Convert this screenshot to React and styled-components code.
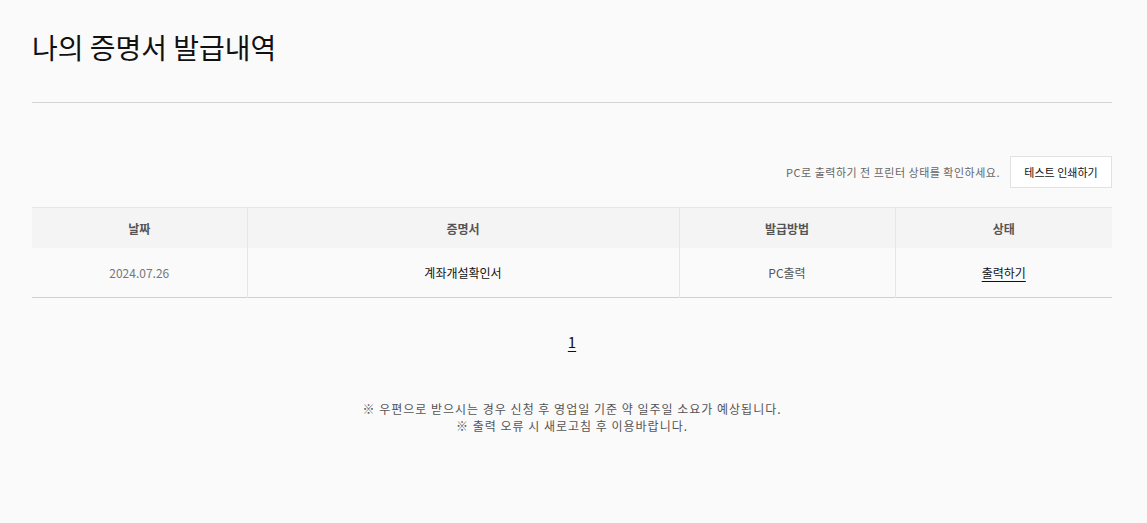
import React from "react";
import styled, { createGlobalStyle } from "styled-components";

const Global = createGlobalStyle`
  html, body { margin: 0; padding: 0; background: #fafafa; }
  body { font-family: "Noto Sans CJK KR", "Noto Sans", sans-serif; color: #111; }
`;

const Page = styled.div`
  width: 1080px;
  padding: 0 0 0 32px;
`;

const Header = styled.header`
  padding: 27px 0 35px;
  border-bottom: 1px solid #d4d4d4;
`;

const Title = styled.h1`
  margin: 0;
  font-size: 28px;
  line-height: 40px;
  font-weight: 400;
  color: #111;
`;

const NoticeBar = styled.div`
  display: flex;
  justify-content: flex-end;
  align-items: center;
  gap: 10px;
  margin-top: 53px;
`;

const NoticeText = styled.span`
  font-size: 11px;
  color: #666;
  letter-spacing: 0.5px;
`;

const TestButton = styled.button`
  height: 32px;
  width: 102px;
  background: #fff;
  border: 1px solid #e2e2e2;
  font-family: inherit;
  font-size: 11px;
  color: #111;
  padding: 0;
  cursor: pointer;
`;

const Table = styled.table`
  width: 100%;
  margin-top: 19px;
  border-collapse: collapse;
  table-layout: fixed;
  border-top: 1px solid #e6e6e6;
  border-bottom: 1px solid #cfcfcf;
`;

const Col = styled.col`
  width: ${(p) => p.$w}px;
`;

const Th = styled.th`
  height: 40px;
  background: #f4f4f4;
  font-size: 12px;
  font-weight: 700;
  color: #555;
  padding: 0;
  border-left: ${(p) => (p.$first ? "none" : "1px solid #e6e6e6")};
`;

const Td = styled.td`
  height: 49px;
  text-align: center;
  font-size: 12px;
  padding: 0;
  color: ${(p) => p.$color || "#111"};
  border-left: ${(p) => (p.$first ? "none" : "1px solid #e6e6e6")};
`;

const PrintLink = styled.a`
  color: #111;
  text-decoration: underline;
  text-underline-offset: 3px;
  cursor: pointer;
`;

const Pagination = styled.div`
  margin-top: 34px;
  text-align: center;
  line-height: 18px;
`;

const PageNum = styled.a`
  font-size: 15px;
  color: #111;
  text-decoration: underline;
  text-underline-offset: 3px;
`;

const Notes = styled.div`
  margin-top: 49px;
  text-align: center;
  font-size: 12px;
  line-height: 17px;
  color: #555;
  letter-spacing: 1px;
`;

export default function App() {
  return (
    <>
      <Global />
      <Page>
        <Header>
          <Title>나의 증명서 발급내역</Title>
        </Header>
        <NoticeBar>
          <NoticeText>PC로 출력하기 전 프린터 상태를 확인하세요.</NoticeText>
          <TestButton>테스트 인쇄하기</TestButton>
        </NoticeBar>
        <Table>
          <colgroup>
            <Col $w={215} />
            <Col $w={432} />
            <Col $w={216} />
            <Col $w={217} />
          </colgroup>
          <thead>
            <tr>
              <Th $first>날짜</Th>
              <Th>증명서</Th>
              <Th>발급방법</Th>
              <Th>상태</Th>
            </tr>
          </thead>
          <tbody>
            <tr>
              <Td $first $color="#777">2024.07.26</Td>
              <Td>계좌개설확인서</Td>
              <Td $color="#555">PC출력</Td>
              <Td>
                <PrintLink>출력하기</PrintLink>
              </Td>
            </tr>
          </tbody>
        </Table>
        <Pagination>
          <PageNum>1</PageNum>
        </Pagination>
        <Notes>
          <div>※ 우편으로 받으시는 경우 신청 후 영업일 기준 약 일주일 소요가 예상됩니다.</div>
          <div>※ 출력 오류 시 새로고침 후 이용바랍니다.</div>
        </Notes>
      </Page>
    </>
  );
}
